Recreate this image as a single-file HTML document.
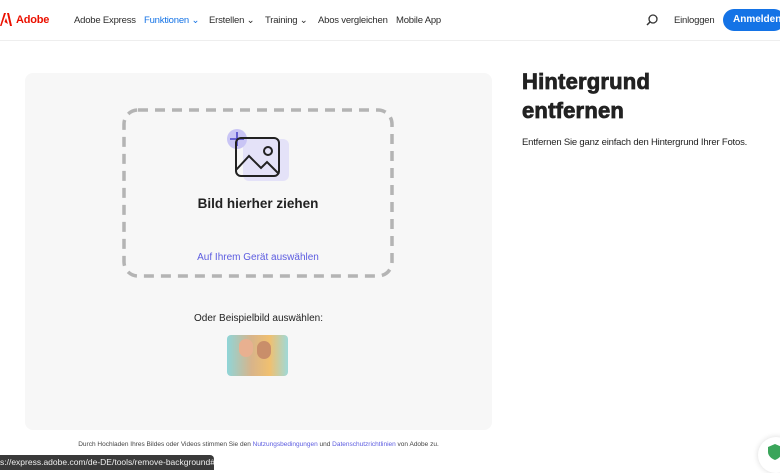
<!DOCTYPE html>
<html><head><meta charset="utf-8">
<style>
*{margin:0;padding:0;box-sizing:border-box}
body{width:780px;height:470px;overflow:hidden;background:#fff;font-family:"Liberation Sans",sans-serif;color:#2c2c2c;position:relative}
.nav{position:absolute;left:0;top:0;width:780px;height:41px;border-bottom:1px solid #eee}
.nav span{position:absolute;top:15px;font-size:9.5px;color:#2c2c2c;letter-spacing:-0.2px}
.logo{position:absolute;left:0;top:13px}
.card{position:absolute;left:25px;top:73px;width:467px;height:357px;background:#f7f7f7;border-radius:8px}
.btn{position:absolute;left:723px;top:9px;width:62px;height:22px;background:#1473e6;border-radius:11px;color:#fff;font-size:10px;font-weight:bold;line-height:22px;padding-left:10px}
</style></head><body>
<div class="nav">
 <svg class="logo" width="12" height="13" viewBox="0 0 12 13"><path d="M0 13L4 0H6L1.5 13Z M7 0h2l3 13h-2z M4.5 9l1.5-4 2 6z" fill="#eb1000"/></svg>
 <span style="left:16px;top:14px;color:#eb1000;font-size:11px;font-weight:bold">Adobe</span>
 <span style="left:74px">Adobe Express</span>
 <span style="left:144px;color:#1473e6">Funktionen ⌄</span>
 <span style="left:209px">Erstellen ⌄</span>
 <span style="left:265px">Training ⌄</span>
 <span style="left:318px">Abos vergleichen</span>
 <span style="left:396px">Mobile App</span>
 <svg style="position:absolute;left:646px;top:14px" width="12" height="12" viewBox="0 0 12 12"><circle cx="7" cy="5" r="4" fill="none" stroke="#333" stroke-width="1.3"/><path d="M4 8L1 11" stroke="#333" stroke-width="1.5"/></svg>
 <span style="left:674px">Einloggen</span>
 <div class="btn">Anmelden</div>
</div>
<div class="card"></div>
<svg style="position:absolute;left:122px;top:108px" width="272" height="170"><rect x="2" y="2" width="268" height="166" rx="14" fill="none" stroke="#b4b4b4" stroke-width="3.5" stroke-dasharray="10 7"/></svg>
<svg style="position:absolute;left:225px;top:127px" width="66" height="58" viewBox="0 0 66 58">
 <rect x="18" y="12" width="46" height="42" rx="6" fill="#e4e2f8"/>
 <circle cx="12" cy="12" r="10" fill="#c9c5f5"/>
 <path d="M12 5v14M5 12h14" stroke="#4b45c8" stroke-width="1.6"/>
 <rect x="11" y="11" width="43" height="38" rx="5" fill="none" stroke="#222" stroke-width="2"/>
 <path d="M11 43l13-14 12 12 6-6 12 12" fill="none" stroke="#222" stroke-width="2"/>
 <circle cx="43" cy="24" r="4" fill="none" stroke="#222" stroke-width="2"/>
</svg>
<div style="position:absolute;left:124px;width:268px;top:196px;text-align:center;font-weight:bold;font-size:13.5px;color:#222">Bild hierher ziehen</div>
<div style="position:absolute;left:124px;width:268px;top:252px;text-align:center;font-size:10px;color:#5c5ce0">Auf Ihrem Gerät auswählen</div>
<div style="position:absolute;left:25px;width:467px;top:313px;text-align:center;font-size:10px;color:#222">Oder Beispielbild auswählen:</div>
<div style="position:absolute;left:227px;top:335px;width:61px;height:41px;border-radius:4px;background:linear-gradient(90deg,#8fd5d8,#d8b48a 40%,#f0c070 70%,#9fd9d8)">
 <div style="position:absolute;left:12px;top:4px;width:14px;height:18px;border-radius:7px;background:#e8b090"></div>
 <div style="position:absolute;left:30px;top:6px;width:14px;height:18px;border-radius:7px;background:#c98e6a"></div>
</div>
<div style="position:absolute;left:522px;top:67px;font-size:22px;font-weight:bold;line-height:29px;color:#222;-webkit-text-stroke:0.8px #222;letter-spacing:0.2px">Hintergrund<br>entfernen</div>
<div style="position:absolute;left:522px;top:137px;font-size:9.5px;color:#222;letter-spacing:-0.2px">Entfernen Sie ganz einfach den Hintergrund Ihrer Fotos.</div>
<div style="position:absolute;left:0;width:517px;top:441px;text-align:center;font-size:6.5px;color:#444">Durch Hochladen Ihres Bildes oder Videos stimmen Sie den <span style="color:#5c5ce0">Nutzungsbedingungen</span> und <span style="color:#5c5ce0">Datenschutzrichtlinien</span> von Adobe zu.</div>
<div style="position:absolute;left:0;top:455px;width:214px;height:15px;background:#3a3a3a;border-radius:0 4px 0 0;color:#eee;font-size:8.5px;padding:2px 0 0 0;white-space:nowrap;overflow:hidden">s://express.adobe.com/de-DE/tools/remove-background#</div>
<div style="position:absolute;left:758px;top:437px;width:36px;height:36px;border-radius:18px;background:#fff;box-shadow:0 0 6px rgba(0,0,0,.15)"></div>
<svg style="position:absolute;left:768px;top:444px" width="14" height="16" viewBox="0 0 14 16"><path d="M7 0L14 3V8C14 12 10 15 7 16C4 15 0 12 0 8V3Z" fill="#3aa55a"/></svg>
</body></html>
